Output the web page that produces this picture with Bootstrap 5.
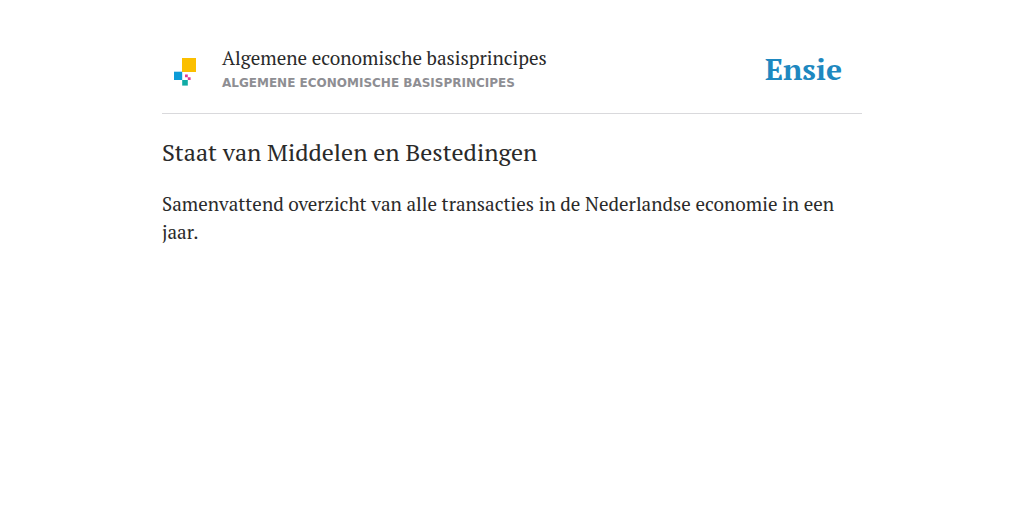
<!DOCTYPE html>
<html lang="nl">
<head>
<meta charset="utf-8">
<meta name="viewport" content="width=device-width, initial-scale=1">
<title>Staat van Middelen en Bestedingen - Ensie</title>
<link rel="stylesheet" href="https://cdn.jsdelivr.net/npm/bootstrap@5.3.0/dist/css/bootstrap.min.css">
<style>
  body { font-family: "PT Serif", "Liberation Serif", serif; color: #2a2a2a; background: #fff; }
  .page { max-width: 700px; }
  .masthead { border-bottom: 1px solid #d9d9dc; padding: 44px 20px 19px 12px; }
  .source-logo { margin-top: 5px; margin-right: 26px; }
  .source-title { font-size: 19px; line-height: 28px; }
  .source-name { font: bold 12px/22px "DejaVu Sans", sans-serif; color: #8e8e93; }
  .brand-link { font-size: 30px; line-height: 44px; font-weight: 700; color: #1e88c0; }
  .entry-title { font-size: 24px; line-height: 36px; margin: 20px 0; }
  .entry-text { font-size: 19px; line-height: 28px; }
</style>
</head>
<body>
<div class="page mx-auto">
  <header class="masthead d-flex align-items-center">
    <svg class="source-logo flex-shrink-0" width="22" height="28" viewBox="0 0 22 28" aria-hidden="true">
      <path fill="#fbbf00" d="M8 0h14v14H8z"/>
      <path fill="#0c9bd7" d="M0 13.700h8.200V22H0z"/>
      <path fill="#10aba5" d="M8.200 22h5.600v5.600H8.200z"/>
      <path fill="#e23a92" d="M11 16.500h2.800v2.800H11zM13.800 19.300h2.800v2.800h-2.800z"/>
    </svg>
    <div class="flex-grow-1">
      <div class="source-title">Algemene economische basisprincipes</div>
      <div class="source-name text-uppercase">Algemene economische basisprincipes</div>
    </div>
    <a class="brand-link text-decoration-none" href="#">Ensie</a>
  </header>
  <main>
    <h1 class="entry-title fw-normal">Staat van Middelen en Bestedingen</h1>
    <p class="entry-text mb-0">Samenvattend overzicht van alle transacties in de Nederlandse economie in een jaar.</p>
  </main>
</div>
<script src="https://cdn.jsdelivr.net/npm/bootstrap@5.3.0/dist/js/bootstrap.bundle.min.js"></script>
</body>
</html>
